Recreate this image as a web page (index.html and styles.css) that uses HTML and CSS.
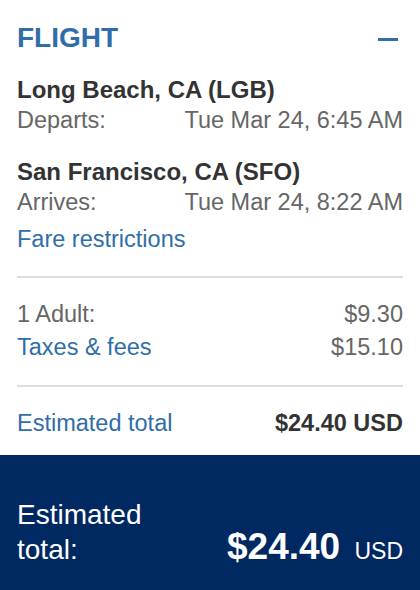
FILE: index.html
```html
<!DOCTYPE html>
<html lang="en">
<head>
  <meta charset="UTF-8">
  <meta name="viewport" content="width=device-width, initial-scale=1.0">
  <title>Flight summary</title>
  <link rel="stylesheet" href="styles.css">
</head>
<body>
  <section class="summary">
    <header class="summary-head">
      <h2>FLIGHT</h2>
      <button class="collapse" aria-label="Collapse"><span></span></button>
    </header>

    <div class="leg">
      <div class="city">Long Beach, CA (LGB)</div>
      <div class="row"><span>Departs:</span><span>Tue Mar 24, 6:45 AM</span></div>
    </div>

    <div class="leg">
      <div class="city">San Francisco, CA (SFO)</div>
      <div class="row"><span>Arrives:</span><span>Tue Mar 24, 8:22 AM</span></div>
    </div>

    <a class="link fare-link" href="#">Fare restrictions</a>

    <hr>

    <div class="prices">
      <div class="row"><span>1 Adult:</span><span>$9.30</span></div>
      <div class="row"><a class="link" href="#">Taxes &amp; fees</a><span>$15.10</span></div>
    </div>

    <hr>

    <div class="row total">
      <a class="link" href="#">Estimated total</a>
      <strong>$24.40 USD</strong>
    </div>
  </section>

  <footer class="total-bar">
    <div class="total-label">Estimated total:</div>
    <div class="total-amount">$24.40 <small>USD</small></div>
  </footer>
</body>
</html>
```

FILE: styles.css
```css
* {
  box-sizing: border-box;
}

body {
  margin: 0;
  font-family: "Liberation Sans", Arial, Helvetica, sans-serif;
  font-size: 23.5px;
  color: #666;
  background-color: #fff;
}

.summary {
  padding: 0 17px 15px;
}

.summary-head {
  display: flex;
  justify-content: space-between;
  align-items: center;
  height: 74px;

  h2 {
    margin: 0;
    padding-top: 2px;
    font-size: 28px;
    line-height: 28px;
    color: #2f6ea8;
  }
}

.collapse {
  border: 0;
  background: none;
  padding: 0;
  margin-right: 5px;
  width: 20px;
  height: 20px;
  display: flex;
  align-items: center;
  cursor: pointer;

  span {
    display: block;
    width: 20px;
    height: 3px;
    margin-top: 5px;
    background-color: #2f6ea8;
  }
}

.leg {
  line-height: 31px;

  & + .leg {
    margin-top: 20px;
  }
}

.city {
  font-weight: bold;
  font-size: 24px;
  color: #333;
}

.row {
  display: flex;
  justify-content: space-between;
}

.link {
  color: #2f6ea8;
  text-decoration: none;
}

.fare-link {
  display: block;
  margin-top: 6px;
  line-height: 31px;
}

hr {
  border: 0;
  border-top: 2px solid #ddd;
  margin: 21px 0 20px;
}

.prices {
  line-height: 33px;
}

.total {
  line-height: 33px;

  strong {
    color: #333;
  }
}

.total-bar {
  display: flex;
  justify-content: space-between;
  align-items: last baseline;
  padding: 42px 17px 40px;
  background-color: #002861;
  color: #fff;
}

.total-label {
  max-width: 160px;
  font-size: 28px;
  line-height: 35px;
}

.total-amount {
  font-size: 37px;
  font-weight: bold;

  small {
    font-size: 23px;
    font-weight: normal;
    margin-left: 4px;
  }
}
```
